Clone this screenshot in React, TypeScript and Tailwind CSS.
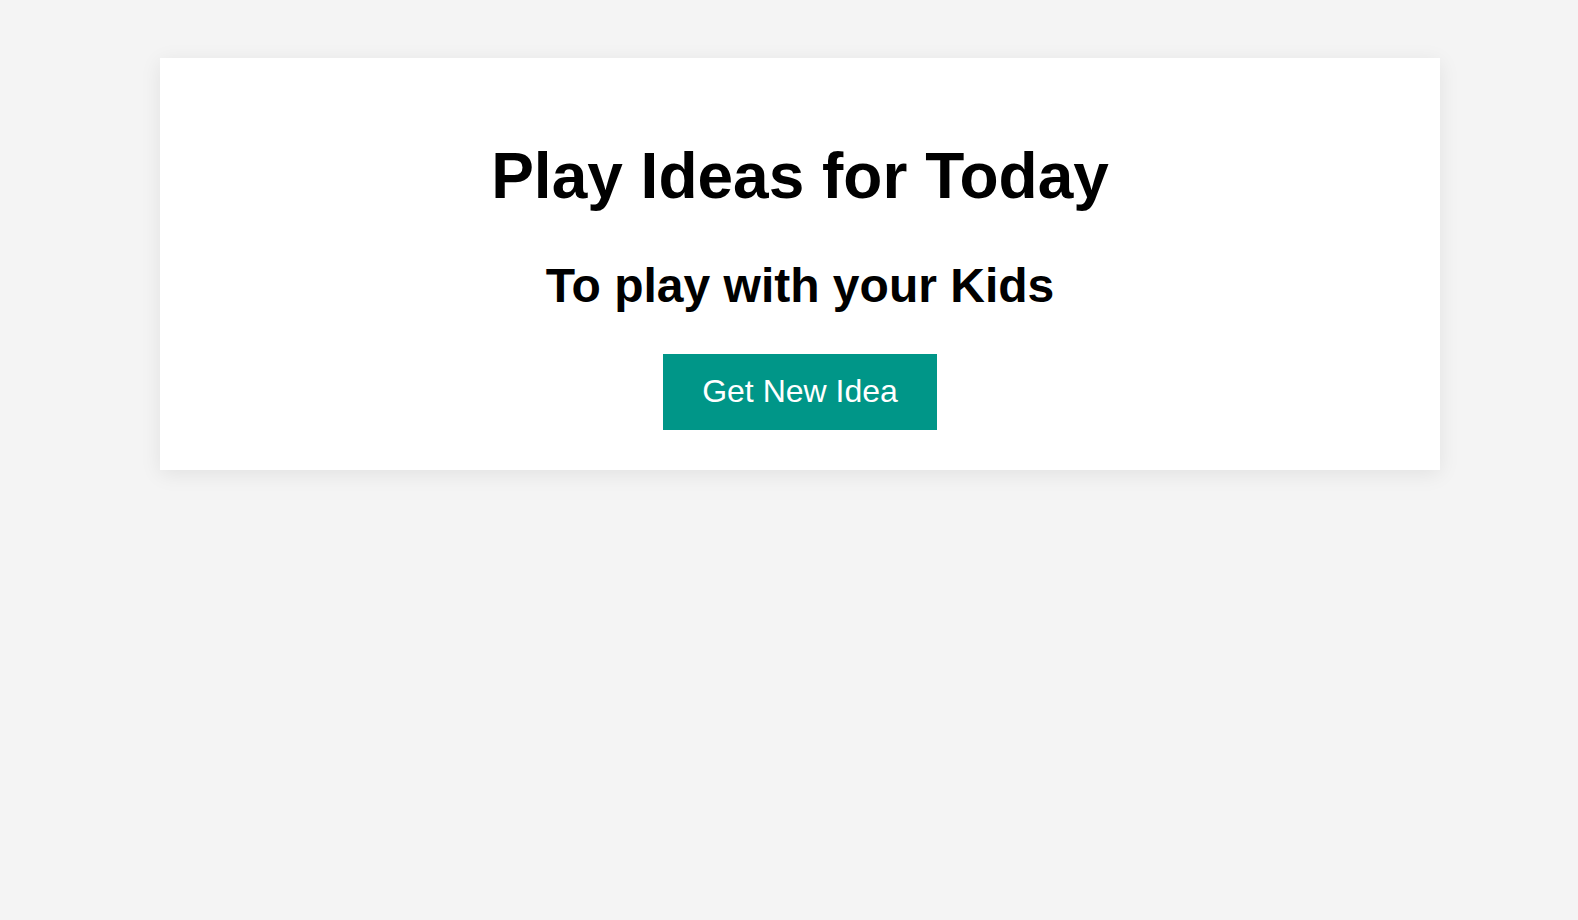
export default function App() {
  return (
    <div className="min-h-[920px] w-full bg-[#f4f4f4] pt-[58px] font-['Liberation_Sans',Arial,sans-serif] text-black">
      <div className="ml-[160px] w-[1280px] bg-white pt-[82px] pb-[40px] text-center shadow-[0_4px_20px_rgba(0,0,0,0.08)]">
        <h1 className="text-[64px] font-bold leading-[72px]">Play Ideas for Today</h1>
        <h2 className="mt-[47px] text-[48px] font-bold leading-[54px]">To play with your Kids</h2>
        <button className="mt-[41px] bg-[#009688] px-[39px] pt-[19px] pb-[21px] text-[32px] leading-[36px] text-white">
          Get New Idea
        </button>
      </div>
    </div>
  );
}
